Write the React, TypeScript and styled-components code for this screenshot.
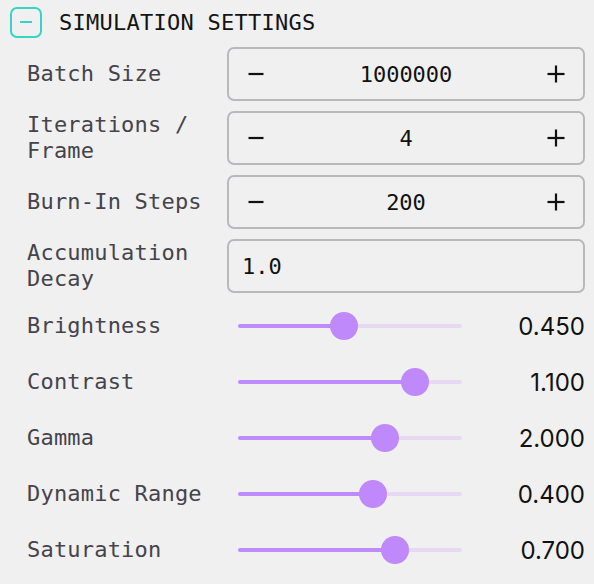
import React from 'react';
import styled, { createGlobalStyle } from 'styled-components';

const GlobalStyle = createGlobalStyle`
  body {
    margin: 0;
    background: #f0f0f0;
  }
`;

type Stepper = { kind: 'stepper'; label: string; value: string };
type Field = { kind: 'field'; label: string; value: string };
type Slider = { kind: 'slider'; label: string; value: number; min: number; max: number };
type Setting = Stepper | Field | Slider;

const settings: Setting[] = [
  { kind: 'stepper', label: 'Batch Size', value: '1000000' },
  { kind: 'stepper', label: 'Iterations / Frame', value: '4' },
  { kind: 'stepper', label: 'Burn-In Steps', value: '200' },
  { kind: 'field', label: 'Accumulation Decay', value: '1.0' },
  { kind: 'slider', label: 'Brightness', value: 0.45, min: 0, max: 0.96 },
  { kind: 'slider', label: 'Contrast', value: 1.1, min: 0.1, max: 1.3 },
  { kind: 'slider', label: 'Gamma', value: 2.0, min: 0.1, max: 2.9 },
  { kind: 'slider', label: 'Dynamic Range', value: 0.4, min: 0, max: 0.65 },
  { kind: 'slider', label: 'Saturation', value: 0.7, min: 0, max: 0.96 },
];

const MinusIcon = () => (
  <svg width="18" height="18" viewBox="0 0 18 18">
    <line x1="1.5" y1="9" x2="16.5" y2="9" stroke="currentColor" strokeWidth="2.2" />
  </svg>
);

const PlusIcon = () => (
  <svg width="18" height="18" viewBox="0 0 18 18">
    <line x1="0.5" y1="9" x2="17.5" y2="9" stroke="currentColor" strokeWidth="2.2" />
    <line x1="9" y1="0.5" x2="9" y2="17.5" stroke="currentColor" strokeWidth="2.2" />
  </svg>
);

const App = () => {
  return (
    <>
      <GlobalStyle />
      <Panel>
        <Header>
          <Toggle aria-label="Collapse">
            <ToggleBar />
          </Toggle>
          <Title>SIMULATION SETTINGS</Title>
        </Header>

        <Rows>
          {settings.map((s) => {
            if (s.kind === 'slider') {
              const pct = ((s.value - s.min) / (s.max - s.min)) * 100;
              return (
                <Row key={s.label} $height={46}>
                  <Label>{s.label}</Label>
                  <SliderCell>
                    <Track>
                      <Rail>
                        <Fill style={{ width: `${pct}%` }} />
                        <Thumb style={{ left: `${pct}%` }} />
                      </Rail>
                    </Track>
                    <Value>{s.value.toFixed(3)}</Value>
                  </SliderCell>
                </Row>
              );
            }
            if (s.kind === 'field') {
              return (
                <Row key={s.label} $height={54}>
                  <Label>{s.label}</Label>
                  <Box>
                    <FieldText>{s.value}</FieldText>
                  </Box>
                </Row>
              );
            }
            return (
              <Row key={s.label} $height={54}>
                <Label>{s.label}</Label>
                <Box>
                  <StepButton aria-label="Decrease">
                    <MinusIcon />
                  </StepButton>
                  <StepValue>{s.value}</StepValue>
                  <StepButton aria-label="Increase">
                    <PlusIcon />
                  </StepButton>
                </Box>
              </Row>
            );
          })}
        </Rows>
      </Panel>
    </>
  );
};

const mono = `"DejaVu Sans Mono", "Liberation Mono", monospace`;

const Panel = styled.div`
  padding: 6px 9px 0 10px;
  font-family: ${mono};
`;

const Header = styled.div`
  display: flex;
  align-items: center;
  gap: 17px;
  height: 32px;
`;

const Toggle = styled.button`
  display: flex;
  align-items: center;
  justify-content: center;
  width: 32px;
  height: 31px;
  padding: 0;
  border: 2px solid #33d6c4;
  border-radius: 7px;
  background: transparent;
`;

const ToggleBar = styled.span`
  width: 12px;
  height: 2px;
  background: #33d6c4;
`;

const Title = styled.h2`
  margin: 0;
  font-size: 22px;
  font-weight: 500;
  letter-spacing: 0.25px;
  color: #141414;
`;

const Rows = styled.div`
  display: flex;
  flex-direction: column;
  gap: 10px;
  margin-top: 9px;
  padding-left: 17px;
`;

const Row = styled.div<{ $height: number }>`
  display: grid;
  grid-template-columns: 188px 1fr;
  column-gap: 12px;
  align-items: center;
  height: ${(p) => p.$height}px;
`;

const Label = styled.div`
  font-size: 22px;
  line-height: 26px;
  letter-spacing: 0.2px;
  font-weight: 500;
  color: #45434c;
`;

const Box = styled.div`
  display: flex;
  align-items: center;
  box-sizing: border-box;
  height: 54px;
  border: 2px solid #bab7bd;
  border-radius: 7px;
`;

const StepButton = styled.button`
  display: flex;
  align-items: center;
  justify-content: center;
  width: 54px;
  height: 100%;
  padding: 0;
  border: 0;
  background: transparent;
  color: #111;
`;

const StepValue = styled.span`
  flex: 1;
  text-align: center;
  font-size: 22px;
  color: #111;
`;

const FieldText = styled.span`
  padding-left: 13px;
  font-size: 22px;
  color: #111;
`;

const SliderCell = styled.div`
  display: flex;
  align-items: center;
  padding-left: 11px;
`;

const Track = styled.div`
  width: 224px;
  padding: 0 14px;
  box-sizing: border-box;
  height: 4px;
  border-radius: 2px;
  background: linear-gradient(to right, #bf8bf8 0 14px, #e7d9f3 14px);
`;

const Rail = styled.div`
  position: relative;
  height: 4px;
`;

const Fill = styled.div`
  height: 4px;
  background: #bf8bf8;
`;

const Thumb = styled.div`
  position: absolute;
  top: 50%;
  width: 28px;
  height: 28px;
  border-radius: 50%;
  background: #bf88fb;
  transform: translate(-50%, -50%);
`;

const Value = styled.span`
  flex: 1;
  text-align: right;
  font-family: Inter, "Noto Sans", sans-serif;
  font-size: 24px;
  color: #111;
`;

export default App;
